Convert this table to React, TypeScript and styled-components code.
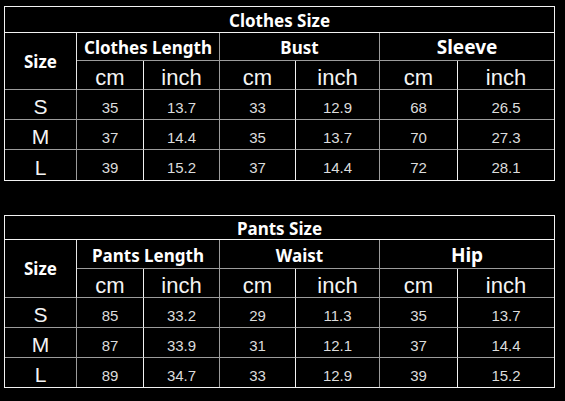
import React from "react";
import styled, { createGlobalStyle } from "styled-components";

const GlobalStyle = createGlobalStyle`
  * { box-sizing: border-box; }
  html, body {
    margin: 0;
    padding: 0;
    background: #000;
  }
  body {
    width: 565px;
    height: 401px;
    overflow: hidden;
    color: #fff;
  }
`;

const Page = styled.div`
  display: flex;
  flex-direction: column;
  gap: 34px;
  padding: 6px 0 0 4px;
`;

const Table = styled.table`
  width: 551px;
  table-layout: fixed;
  border-collapse: separate;
  border-spacing: 0;
  border: 1px solid #f2f2f2;
  background: #000;

  td {
    padding: 0;
    text-align: center;
    vertical-align: middle;
    border-right: 1px solid #9c9c9c;
    border-bottom: 1px solid #9c9c9c;
    white-space: nowrap;
  }
  td:last-child {
    border-right: none;
  }
  tbody tr:last-child td {
    border-bottom: none;
  }
`;

const TitleCell = styled.td<{ $h: number }>`
  height: ${(p) => p.$h}px;
  font-family: "Noto Sans", "Liberation Sans", sans-serif;
  font-weight: 700;
  font-size: 17px;
  line-height: 1;
  padding-top: 1px !important;
  border-bottom-color: #f2f2f2 !important;
`;

const SizeHead = styled.td`
  font-family: "Noto Sans", "Liberation Sans", sans-serif;
  font-weight: 700;
  font-size: 17px;
  line-height: 1;
  border-right-color: #e6e6e6 !important;
`;

const GroupHead = styled.td<{ $h: number; $big?: boolean }>`
  height: ${(p) => p.$h}px;
  font-family: "Noto Sans", "Liberation Sans", sans-serif;
  font-weight: 700;
  font-size: ${(p) => (p.$big ? 19 : 17)}px;
  line-height: 1;
  padding-top: 2px !important;
`;

const UnitCell = styled.td<{ $split?: boolean }>`
  height: 29px;
  font-family: "Liberation Sans", Arial, sans-serif;
  font-size: 22px;
  line-height: 1;
  color: #f4f4f4;
  padding-top: 5px !important;
  ${(p) => (p.$split ? "border-right-color: #f2f2f2 !important;" : "")}
`;

const SizeCell = styled.td<{ $h: number }>`
  height: ${(p) => p.$h}px;
  font-family: "Liberation Sans", Arial, sans-serif;
  font-size: 21px;
  line-height: 1;
  color: #f4f4f4;
  padding-top: 4px !important;
`;

const NumCell = styled.td<{ $split?: boolean }>`
  font-family: "Liberation Sans", Arial, sans-serif;
  font-size: 15px;
  line-height: 1;
  color: #dcdcdc;
  padding-top: 5px !important;
  ${(p) => (p.$split ? "border-right-color: #f2f2f2 !important;" : "")}
`;

const widths = [72, 67, 76, 76, 84, 78, 96];

type SizeTable = {
  title: string;
  titleH: number;
  headH: number;
  lastH: number;
  groups: { name: string; big?: boolean }[];
  rows: { size: string; values: string[] }[];
};

const tables: SizeTable[] = [
  {
    title: "Clothes Size",
    titleH: 26,
    headH: 28,
    lastH: 30,
    groups: [{ name: "Clothes Length" }, { name: "Bust" }, { name: "Sleeve", big: true }],
    rows: [
      { size: "S", values: ["35", "13.7", "33", "12.9", "68", "26.5"] },
      { size: "M", values: ["37", "14.4", "35", "13.7", "70", "27.3"] },
      { size: "L", values: ["39", "15.2", "37", "14.4", "72", "28.1"] },
    ],
  },
  {
    title: "Pants Size",
    titleH: 24,
    headH: 29,
    lastH: 29,
    groups: [{ name: "Pants Length" }, { name: "Waist" }, { name: "Hip", big: true }],
    rows: [
      { size: "S", values: ["85", "33.2", "29", "11.3", "35", "13.7"] },
      { size: "M", values: ["87", "33.9", "31", "12.1", "37", "14.4"] },
      { size: "L", values: ["89", "34.7", "33", "12.9", "39", "15.2"] },
    ],
  },
];

const SizeChart: React.FC<{ data: SizeTable }> = ({ data }) => (
  <Table>
    <colgroup>
      {widths.map((w, i) => (
        <col key={i} style={{ width: w }} />
      ))}
    </colgroup>
    <tbody>
      <tr>
        <TitleCell $h={data.titleH} colSpan={7}>
          {data.title}
        </TitleCell>
      </tr>
      <tr>
        <SizeHead rowSpan={2}>Size</SizeHead>
        {data.groups.map((g) => (
          <GroupHead key={g.name} $h={data.headH} $big={g.big} colSpan={2}>
            {g.name}
          </GroupHead>
        ))}
      </tr>
      <tr>
        {data.groups.map((g) => (
          <React.Fragment key={g.name}>
            <UnitCell $split>cm</UnitCell>
            <UnitCell>inch</UnitCell>
          </React.Fragment>
        ))}
      </tr>
      {data.rows.map((r, ri) => (
        <tr key={r.size}>
          <SizeCell $h={ri === data.rows.length - 1 ? data.lastH : 30}>{r.size}</SizeCell>
          {r.values.map((v, i) => (
            <NumCell key={i} $split={i % 2 === 0}>
              {v}
            </NumCell>
          ))}
        </tr>
      ))}
    </tbody>
  </Table>
);

export default function App() {
  return (
    <>
      <GlobalStyle />
      <Page>
        {tables.map((t) => (
          <SizeChart key={t.title} data={t} />
        ))}
      </Page>
    </>
  );
}
